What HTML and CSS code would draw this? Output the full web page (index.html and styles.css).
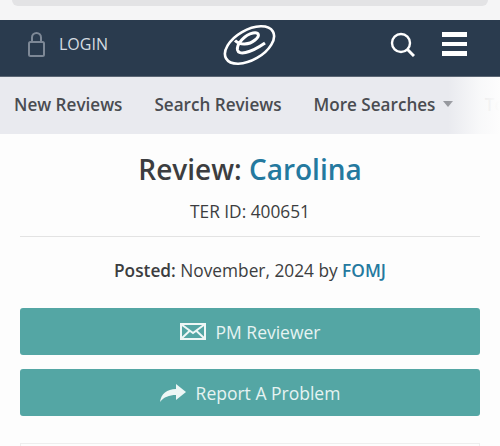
FILE: index.html
```html
<!DOCTYPE html>
<html>
<head>
<meta charset="UTF-8">
<title>Review: Carolina</title>
<meta name="viewport" content="width=device-width, initial-scale=1.0">
<link rel="stylesheet" href="styles.css">
</head>
<body>

<div class="browser-bar"><div class="address-pill"></div></div>

<header class="site-header">
  <a class="login">
    <svg class="lock-icon" width="17" height="25" viewBox="0 0 17 25" fill="none" stroke="#7d8896" stroke-width="2">
      <rect x="1" y="10" width="15" height="14" rx="1.500"/>
      <path d="M4 10V5.500a4.500 4.500 0 0 1 9 0V10"/>
    </svg>
    <span>LOGIN</span>
  </a>
  <svg class="logo" width="54" height="42" viewBox="0 0 54 42" fill="none" stroke="#fff">
    <ellipse cx="26.500" cy="21" rx="27" ry="15" transform="rotate(-30 26.500 21)" stroke-width="2.600"/>
    <path stroke-width="3" d="M12 16.500C17 21.500 26 21 32 16C37.500 11.500 36 8 30 9C22 10.500 13.500 20 14.500 26C15.500 31 26 30 42 19"/>
  </svg>
  <div class="header-tools">
    <svg width="25" height="25" viewBox="0 0 25 25" fill="none" stroke="#fff" stroke-width="2.400">
      <circle cx="11" cy="11" r="9"/>
      <path d="M17.500 17.500L24 24" stroke-width="3"/>
    </svg>
    <div class="burger"><i></i><i></i><i></i></div>
  </div>
</header>

<nav class="sub-nav">
  <a>New Reviews</a>
  <a>Search Reviews</a>
  <a>More Searches <b class="caret"></b></a>
  <a class="faded">Top</a>
  <div class="nav-fade"></div>
</nav>

<main class="content">
  <h1 class="review-title">Review: <a>Carolina</a></h1>
  <p class="ter-id">TER ID: 400651</p>
  <hr class="divider">
  <p class="posted"><strong>Posted:</strong> November, 2024 by <a>FOMJ</a></p>

  <a class="btn">
    <svg width="26" height="17" viewBox="0 0 26 17" fill="none" stroke="#eef7f6" stroke-width="2">
      <rect x="1" y="1" width="24" height="15"/>
      <path d="M1.500 1.500L13 10L24.500 1.500M1.500 15.500L10 7.500M24.500 15.500L16 7.500"/>
    </svg>
    PM Reviewer
  </a>
  <a class="btn">
    <svg width="26" height="18" viewBox="0 0 26 18" fill="#eef7f6">
      <path d="M16 0L26 8L16 16V11C9 11 4 13 0 18C1 10 7 5 16 5Z"/>
    </svg>
    Report A Problem
  </a>

  <div class="next-card"></div>
</main>

</body>
</html>
```

FILE: styles.css
```css
html, body {
  height: 100%;
}
body {
  margin: 0;
  overflow: hidden;
  background-color: #fdfdfd;
  color: #3c3d40;
  font-family: "Open Sans", "Noto Sans", sans-serif;
}
a {
  color: inherit;
  text-decoration: none;
}
.browser-bar {
  height: 20px;
  background-color: #f5f5f6;
}
.address-pill {
  margin: 0 12px;
  height: 6px;
  border-radius: 0 0 10px 10px;
  background-color: #e3e3e5;
}
.site-header {
  position: relative;
  display: flex;
  justify-content: space-between;
  align-items: center;
  height: 57px;
  box-sizing: border-box;
  padding: 0 33px 8px 28px;
  border-bottom: 1px solid #5b6674;
  background-color: #2a3b4e;
  color: #d5dbe1;
}
.login {
  display: flex;
  align-items: center;
  gap: 14px;
  font-size: 16px;
}
.logo {
  position: absolute;
  left: 223px;
  top: 4px;
}
.header-tools {
  display: flex;
  align-items: center;
  gap: 27px;
}
.burger {
  display: flex;
  flex-direction: column;
  gap: 5px;
}
.burger i {
  display: block;
  width: 25px;
  height: 4.500px;
  background-color: #fff;
}
.sub-nav {
  position: relative;
  display: flex;
  align-items: center;
  gap: 32px;
  height: 57px;
  box-sizing: border-box;
  padding: 0 0 2px 14px;
  overflow: hidden;
  white-space: nowrap;
  background-color: #e9eaef;
  font-size: 17.100px;
  font-weight: 600;
  color: #4a4c51;
}
.caret {
  display: inline-block;
  margin-left: 3px;
  border-left: 5px solid transparent;
  border-right: 5px solid transparent;
  border-top: 6px solid #96989e;
  vertical-align: 4px;
}
.faded {
  color: #a8aaae;
}
.nav-fade {
  position: absolute;
  top: 0;
  right: 0;
  width: 52px;
  height: 100%;
  background: linear-gradient(to right, rgba(253,253,253,0), rgba(253,253,253,.75) 60%, #fdfdfd);
}
.content {
  padding: 0 20px;
  text-align: center;
}
.review-title {
  margin: 0;
  padding-top: 16px;
  font-size: 28px;
  line-height: 38px;
  font-weight: 600;
}
.review-title a {
  color: #24799f;
}
.ter-id {
  margin: 12px 0 0;
  font-size: 17.300px;
  line-height: 23px;
}
.divider {
  margin: 13px 0 0;
  border: 0;
  border-top: 1px solid #e3e3e3;
}
.posted {
  margin: 22px 0 0;
  font-size: 17.300px;
  line-height: 23px;
}
.posted strong {
  font-weight: 600;
}
.posted a {
  color: #24799f;
  font-weight: 600;
}
.btn {
  display: flex;
  justify-content: center;
  align-items: center;
  gap: 10px;
  height: 47px;
  margin-top: 14px;
  border-radius: 3px;
  background-color: #54a6a4;
  color: #e6f3f2;
  font-size: 17.500px;
}
.posted + .btn {
  margin-top: 26px;
}
.next-card {
  height: 10px;
  margin-top: 27px;
  border: 1px solid #eeeeee;
  border-bottom: 0;
}
```
